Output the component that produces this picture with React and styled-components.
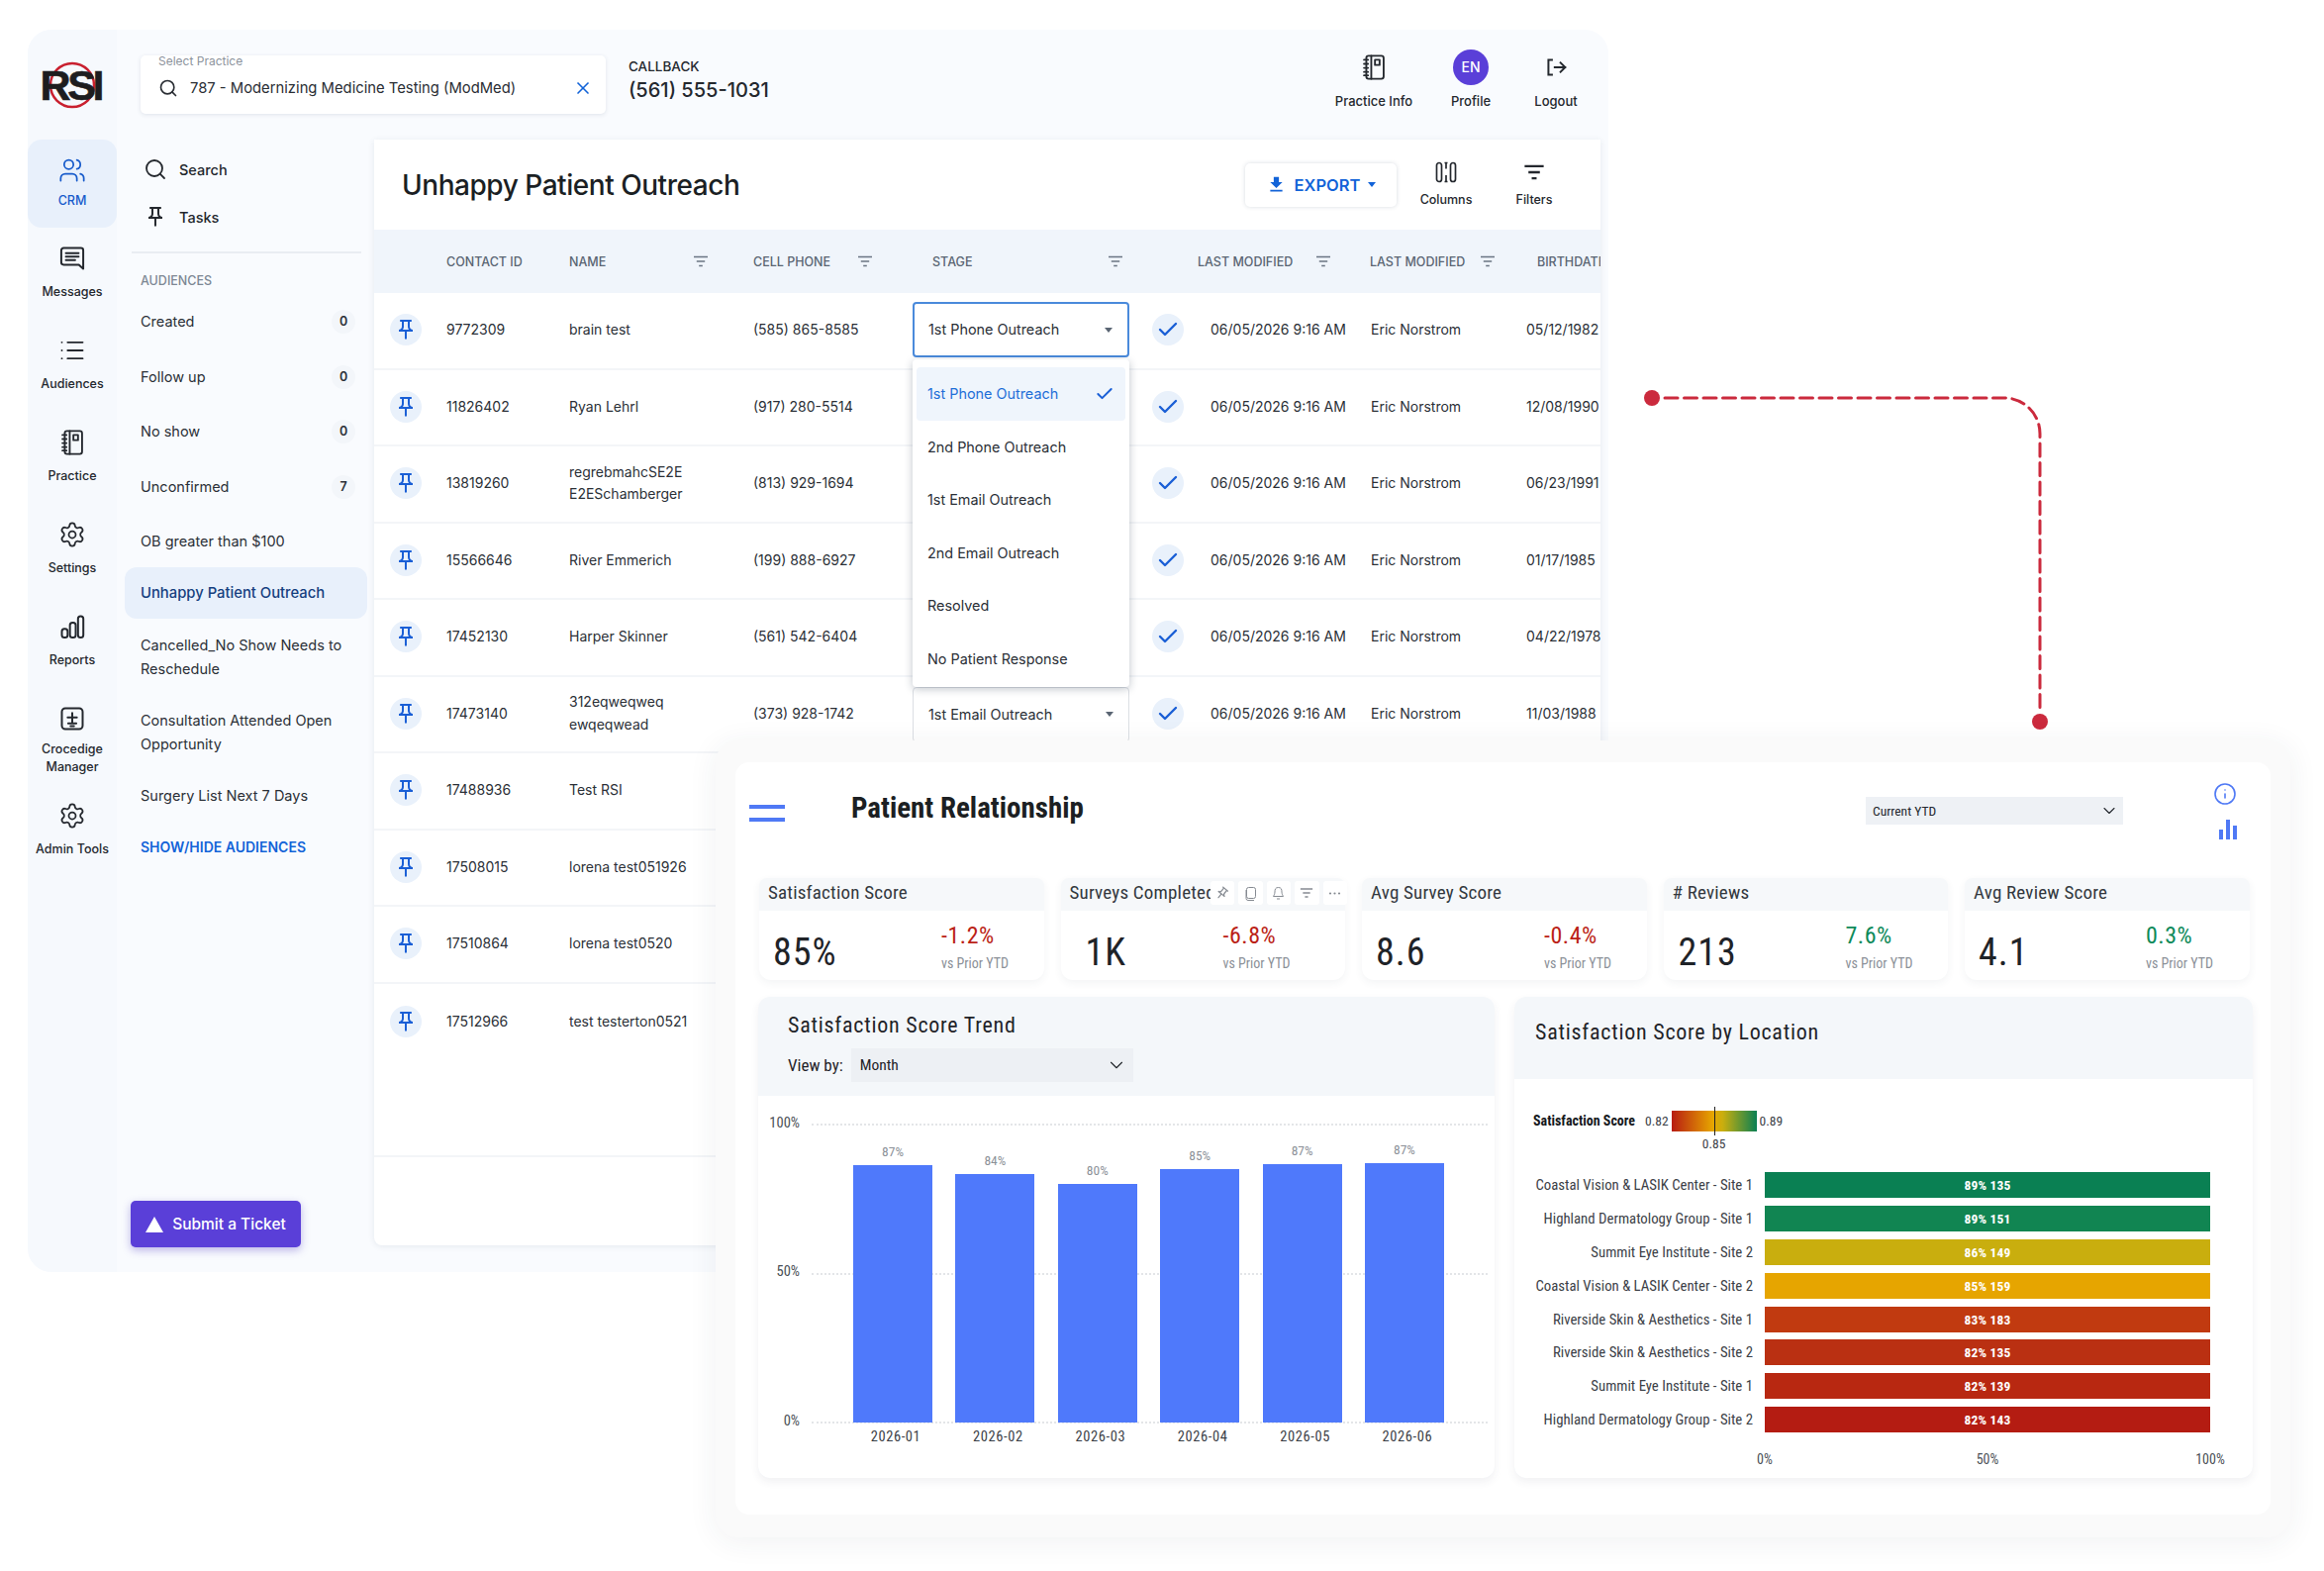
import React from 'react';
import styled, { createGlobalStyle } from 'styled-components';
import { Search, X, Check, Info, ChevronDown, Users, List, Settings } from 'lucide-react';

const ui = `Inter, "Noto Sans", sans-serif`;
const din = `Roboto, "Noto Sans", sans-serif`;

const Global = createGlobalStyle`
  html, body { margin: 0; padding: 0; background: #fff; }
  * { box-sizing: border-box; }
  #root { width: 2348px; height: 1587px; }
`;

const Page = styled.div`position: relative; width: 2348px; height: 1587px; overflow: hidden; background: #fff; font-family: ${ui}; color: #24282e;`;

/* free-canvas windows */
const AppWindow = styled.section`
  position: absolute; left: 28px; top: 30px; width: 1597px; height: 1255px;
  display: flex; background: #f9fbfe; border-radius: 24px; overflow: hidden;
`;
const ReportWindow = styled.section`
  position: absolute; left: 723px; top: 748px; width: 1591px; height: 805px;
  padding: 22px 20px 23px; background: #fafafa; border-radius: 22px;
  box-shadow: 0 4px 30px rgba(40, 50, 70, .07);
`;
const Connector = styled.svg`position: absolute; left: 1650px; top: 385px;`;

/* rail */
const Rail = styled.nav`width: 90px; padding-top: 111px; display: flex; flex-direction: column; background: #f6f9fd;`;
const RailItem = styled.div`
  height: ${p => p.$h || 93}px; display: flex; flex-direction: column; align-items: center; padding-top: 17px; gap: ${p => p.$gap || 11}px;
  font-size: 12.5px; line-height: 18px; font-weight: 500; text-align: center; color: ${p => p.$active ? '#175bcb' : '#24282e'};
  background: ${p => p.$active ? '#e8f0fb' : 'transparent'}; border-radius: ${p => p.$active ? '14px' : '0'};
  svg { width: 28px; height: 28px; flex: none; }
`;
const BodyCol = styled.div`flex: 1; display: flex; flex-direction: column; min-width: 0;`;
const TopBar = styled.header`height: 111px; display: flex; align-items: flex-start; padding: 26px 0 0 24px;`;
const PracticeBox = styled.div`
  position: relative; width: 470px; height: 59px; background: #fff; border-radius: 5px;
  box-shadow: 0 1px 4px rgba(40, 60, 90, .12); display: flex; align-items: center; padding: 6px 13px 0 18px; gap: 12px;
  font-size: 14.8px; font-weight: 400; color: #2a2e34;
`;
const FloatLabel = styled.span`position: absolute; left: 18px; top: -2px; font-size: 12px; color: #8c939c;`;
const PracticeName = styled.span`flex: 1; white-space: nowrap;`;
const Callback = styled.div`margin-left: 23px; padding-top: 2px;`;
const CallbackLabel = styled.div`font-size: 13.5px; line-height: 18px; font-weight: 500; color: #24282e;`;
const CallbackPhone = styled.div`font-size: 20px; line-height: 30px; font-weight: 500; color: #24282e;`;
const TopActions = styled.div`margin-left: auto; margin-right: 7px; display: flex; align-items: flex-start;`;
const TopAction = styled.div`
  width: ${p => p.$w}px; display: flex; flex-direction: column; align-items: center; gap: 11px; font-size: 13px; line-height: 18px; font-weight: 500; color: #24282e; margin-top: -2px;
  svg { width: 28px; height: 28px; }
`;
const Avatar = styled.div`width: 36px; height: 36px; margin-top: -4px; margin-bottom: -4px; border-radius: 50%; background: #5a3fd8; color: #fff; display: flex; align-items: center; justify-content: center; font-size: 14px; font-weight: 500;`;
const Content = styled.div`flex: 1; display: flex; min-height: 0;`;

/* audience panel */
const AudiencePanel = styled.aside`width: 260px; padding: 6px 7px 0 8px; display: flex; flex-direction: column; position: relative;`;
const QuickLink = styled.div`
  height: 48px; display: flex; align-items: center; gap: 12px; padding-left: 19px; font-size: 14.5px; font-weight: 500; color: #24282e;
  svg { width: 24px; height: 24px; flex: none; }
`;
const Divider = styled.div`height: 2px; margin: 11px 6px 0 7px; background: #e9edf2;`;
const SectionLabel = styled.div`margin: 19px 0 4px 16px; font-size: 12.5px; line-height: 18px; font-weight: 500; color: #7d8794;`;
const Audience = styled.div`
  min-height: ${p => p.$h}px; display: flex; align-items: center; justify-content: space-between; padding: ${p => p.$active ? '2px' : '0'} 12px 0 16px; font-size: ${p => p.$active ? 14.8 : 14.5}px; line-height: 23.5px;
  color: ${p => p.$active ? '#16407f' : '#2b3037'}; font-weight: ${p => p.$active ? 500 : 400}; background: ${p => p.$active ? '#e8f0fb' : 'transparent'}; border-radius: ${p => p.$active ? 12 : 0}px;
  margin-top: ${p => p.$mt || 0}px;
`;
const Count = styled.span`width: 24px; height: 24px; border-radius: 50%; background: #f3f6fa; font-size: 12.5px; font-weight: 600; display: flex; align-items: center; justify-content: center;`;
const ShowHide = styled.div`margin: 17px 0 0 16px; font-size: 14px; font-weight: 600; color: #1263d8;`;
const TicketBtn = styled.button`
  position: absolute; left: 14px; bottom: 25px; width: 172px; height: 47px; border: 0; border-radius: 5px; background: #5a3fd8; color: #fff;
  display: flex; align-items: center; justify-content: center; gap: 9px; font: 500 15.5px ${ui}; box-shadow: 0 3px 8px rgba(70, 50, 190, .35);
`;

/* main card */
const MainCard = styled.main`width: 1239px; height: 1117px; background: #fff; border-radius: 0 0 8px 8px; box-shadow: 0 1px 6px rgba(50, 70, 100, .1); display: flex; flex-direction: column; overflow: hidden;`;
const CardHead = styled.div`height: 91px; flex: none; display: flex; align-items: center; padding: 0 28px;`;
const CardTitle = styled.h1`margin: 0; font-size: 28px; font-weight: 500; color: #1b1f24; letter-spacing: -.46px;`;
const ExportBtn = styled.div`
  margin-left: auto; width: 153px; height: 44px; border-radius: 5px; background: #fff; box-shadow: 0 0 4px rgba(40, 60, 90, .18);
  display: flex; align-items: center; justify-content: center; gap: 8px; font-size: 16.5px; font-weight: 600; color: #1263d8; svg { flex: none; }
`;
const HeadTool = styled.div`
  width: ${p => p.$w}px; display: flex; flex-direction: column; align-items: center; gap: 9px; font-size: 12.5px; line-height: 16px; font-weight: 500; color: #24282e;
`;
const Rows = styled.div`flex: 1; position: relative;`;
const HeaderRow = styled.div`
  height: 64px; display: grid; grid-template-columns: 73px 124px 186px 181px 268px 174px 169px 1fr; align-items: center; background: #f0f5fb;
  font-size: 12.5px; font-weight: 500; color: #5a6573; white-space: nowrap;
`;
const HeadCell = styled.div`grid-column: ${p => p.$col}; display: flex; justify-content: space-between; align-items: center; padding-right: ${p => p.$pr || 0}px; overflow: hidden;`;
const Row = styled.div`
  height: 77.5px; display: grid; grid-template-columns: 73px 124px 186px 161px 219px 82px 162px 157px 1fr; align-items: center; position: relative;
  border-bottom: ${p => p.$last ? 'none' : '2px solid #f3f5f8'}; font-size: 14px; line-height: 22.5px; color: #2b3037; white-space: nowrap; padding-bottom: 1px;
`;
const Round = styled.div`width: 32px; height: 32px; border-radius: 50%; background: #e9f1fb; color: #1a5fd6; display: flex; align-items: center; justify-content: center; margin-left: ${p => p.$ml}px;`;
const StageSelect = styled.div`
  height: 56px; display: flex; align-items: center; justify-content: space-between; padding: 0 15px 0 ${p => p.$focus ? 14 : 15}px; background: #fff; border-radius: 4px; font-size: 14.4px;
  border: ${p => p.$focus ? '2px solid #4a8adb' : '1px solid #dcdfe4'}; margin-top: ${p => p.$focus ? 0 : 2}px;
`;
const Caret = styled.span`width: 0; height: 0; border-left: 4px solid transparent; border-right: 4px solid transparent; border-top: 5px solid ${p => p.$c || '#5a6573'};`;
const Menu = styled.div`
  position: absolute; left: 544px; top: 131px; width: 219px; height: 331px; background: #fff; z-index: 3; border-radius: 4px; padding: 8px 4px;
  box-shadow: 0 2px 8px rgba(30, 45, 70, .28); font-size: 14.4px; color: #2b3037;
`;
const MenuItem = styled.div`
  height: 53.5px; display: flex; align-items: center; justify-content: space-between; padding: 0 11px 0 11px; border-radius: 4px;
  background: ${p => p.$on ? '#eff5fc' : 'transparent'}; color: ${p => p.$on ? '#1f6fd8' : '#2b3037'};
`;
const TableFoot = styled.div`position: absolute; left: 0; right: 0; top: 935px; height: 2px; background: #f3f5f8;`;

/* report */
const ReportInner = styled.div`height: 100%; background: #fff; border-radius: 14px; padding: 0 22px 0 14px; font-family: ${din}; font-stretch: 75%; display: flex; flex-direction: column;`;
const ReportHead = styled.div`height: 117px; flex: none; display: flex; align-items: flex-start; position: relative;`;
const Burger = styled.div`width: 36px; height: 17px; margin-top: 43px; border-top: 4px solid #4f79f5; border-bottom: 4px solid #4f79f5;`;
const ReportTitle = styled.h2`margin: 27px 0 0 67px; font-size: 29px; line-height: 38px; font-weight: 700; color: #1c1f23;`;
const YearSelect = styled.div`
  margin: 35px 0 0 auto; width: 260px; height: 28px; background: #eef1f5; display: flex; align-items: center; justify-content: space-between; padding: 0 4px 0 7px; font-size: 13.5px; color: #24282e;
  svg { stroke-width: 1.3; }
`;
const ReportTools = styled.div`width: 149px; flex: none; padding: 20px 34px 0 0; margin-right: -22px; display: flex; flex-direction: column; align-items: flex-end; gap: 14px; color: #4f79f5;`;
const Kpis = styled.div`display: grid; grid-template-columns: repeat(5, 287.5px); column-gap: 17px; height: 103px; flex: none; margin-left: 10px; margin-right: -32px;`;
const Kpi = styled.article`position: relative; background: #f6f8fa; border-radius: 8px 8px 12px 12px; box-shadow: 0 3px 8px rgba(50, 60, 80, .06); display: flex; flex-direction: column;`;
const KpiLabel = styled.div`height: 33px; flex: none; padding-left: 9px; font-size: 19px; line-height: 30px; letter-spacing: .2px; color: #33383e; white-space: nowrap; overflow: hidden;`;
const KpiBody = styled.div`flex: 1; background: #fff; border-radius: 0 0 12px 12px; display: flex; position: relative;`;
const KpiValue = styled.div`margin: 21px 0 0 ${p => p.$x}px; font-size: 38px; line-height: 42px; color: #1f2328; letter-spacing: 1px;`;
const KpiDelta = styled.div`position: absolute; left: ${p => p.$x}px; top: 12px; display: flex; flex-direction: column;`;
const DeltaPct = styled.span`font-size: 24px; line-height: 26px; letter-spacing: .5px; color: ${p => p.$up ? '#0e8a5a' : '#bb1f17'};`;
const DeltaNote = styled.span`font-size: 14px; line-height: 18px; margin-top: 6px; color: #8b9097;`;
const HoverTools = styled.div`position: absolute; left: 151px; top: 3px; display: flex; gap: 4px; z-index: 2;`;
const HoverTool = styled.div`width: 24.5px; height: 24px; background: #fff; border-radius: 3px; color: #868b92; display: flex; align-items: center; justify-content: center;`;
const TiltedPin = styled.span`display: flex; transform: rotate(40deg);`;
const Charts = styled.div`display: grid; grid-template-columns: 744px 746px; column-gap: 20px; margin-top: 17px; height: 486px; flex: none; margin-left: 9px; margin-right: -32px;`;
const ChartCard = styled.article`background: #f4f7fa; border-radius: 12px; display: flex; flex-direction: column; box-shadow: 0 4px 8px rgba(50, 60, 80, .07); overflow: hidden;`;
const ChartHead = styled.div`height: ${p => p.$h}px; flex: none; padding: ${p => p.$pt}px 0 0 ${p => p.$pl}px; font-size: 22px; line-height: 28px; font-weight: 400; letter-spacing: .75px; color: #1f2328;`;
const ViewRow = styled.div`display: flex; align-items: center; gap: 8px; margin-top: 9px; font-size: 17px; letter-spacing: 0;`;
const ViewSelect = styled.div`width: 285px; height: 34px; background: #edf0f4; display: flex; align-items: center; justify-content: space-between; padding: 0 6px 0 9px; font-size: 15.5px; svg { stroke-width: 1.2; }`;
const ChartBody = styled.div`flex: 1; background: #fff; border-radius: 0 0 12px 12px; position: relative;`;
const ColumnPlot = styled.div`
  position: absolute; left: 54px; top: 28px; width: 683px; height: 302px; display: grid; grid-template-columns: repeat(6, 80px); column-gap: 23.4px; padding-left: 42px; align-items: end;
`;
const GridLine = styled.div`position: absolute; left: 0; right: 0; top: ${p => p.$y}px; border-top: 2px dotted #e3e5e8;`;
const AxisLabel = styled.span`position: absolute; left: -54px; width: 42px; top: ${p => p.$y - 9}px; text-align: right; font-size: 14.5px; line-height: 18px; color: #4b5056;`;
const ColBar = styled.div`position: relative; height: ${p => p.$h}px; background: #4f79fb;`;
const ColVal = styled.span`position: absolute; left: 0; right: 0; top: -23px; text-align: center; font-size: 13.5px; line-height: 18px; color: #8c9198;`;
const ColTick = styled.span`position: absolute; left: -7px; right: -13px; bottom: -24px; text-align: center; font-size: 14.5px; line-height: 18px; letter-spacing: .6px; color: #3c4147;`;
const Legend = styled.div`position: absolute; left: 19px; top: 30px; display: flex; align-items: center; font-size: 13.5px; color: #3c4147; height: 24px; white-space: nowrap;`;
const LegendTitle = styled.b`font-size: 14px; color: #15181c; width: 113px;`;
const LegendRamp = styled.div`position: relative; width: 86px; height: 21px; margin: 0 3px 0 3px; background: linear-gradient(90deg, #b81c12, #e6a500 48%, #c9ae0e 60%, #0a8053);`;
const RampMark = styled.span`position: absolute; left: 43px; top: -4px; height: 29px; border-left: 1.5px solid #222;`;
const RampVal = styled.span`position: absolute; left: 23px; width: 40px; top: 25px; text-align: center;`;
const BarPlot = styled.div`position: absolute; left: 19px; top: 94px; width: 700px;`;
const BarRow = styled.div`display: grid; grid-template-columns: 222px 450px; column-gap: 12px; height: 33.9px; align-items: start; position: relative;`;
const BarName = styled.span`text-align: right; font-size: 14.8px; line-height: 26px; color: #3c4147; white-space: nowrap;`;
const Bar = styled.div`height: 26px; background: ${p => p.$c}; color: #fff; font-size: 13.5px; line-height: 26px; font-weight: 700; text-align: center; letter-spacing: .2px;`;
const XTick = styled.span`position: absolute; left: ${p => p.$x}px; top: 376px; width: 50px; text-align: center; font-size: 14px; color: #4b5056;`;

const Notebook = () => (
  <svg viewBox="0 0 24 24" fill="none" stroke="currentColor" strokeWidth="1.6" strokeLinejoin="round" strokeLinecap="round">
    <rect x="5.500" y="2" width="15" height="20" rx="2" />
    <path d="M9.800 2v20M3.500 5.500h3.500M3.500 9h3.500M3.500 12.500h3.500M3.500 16h3.500M3.500 19h3.500" />
    <path d="M13 5.500h4v4.500h-4z" />
  </svg>
);
const Message = () => (
  <svg viewBox="0 0 24 24" fill="none" stroke="currentColor" strokeWidth="1.7" strokeLinejoin="round" strokeLinecap="round">
    <path d="M4.500 3h15a2 2 0 0 1 2 2v16l-3.800-3.500H4.500a2 2 0 0 1-2-2V5a2 2 0 0 1 2-2z" />
    <path d="M6.500 7.500h11M6.500 10.500h11M6.500 13.500h8" />
  </svg>
);
const Bars = () => (
  <svg viewBox="0 0 24 24" fill="none" stroke="currentColor" strokeWidth="1.7">
    <rect x="3" y="14" width="5" height="7.500" rx="2.200" />
    <rect x="10" y="8.500" width="5" height="13" rx="2.200" />
    <rect x="17" y="3" width="4.600" height="18.500" rx="2.200" />
  </svg>
);
const Manager = () => (
  <svg viewBox="0 0 24 24" fill="none" stroke="currentColor" strokeWidth="1.7" strokeLinecap="round">
    <rect x="3" y="3" width="18" height="18" rx="3" />
    <path d="M12 7v8M8 11h8M8.500 16h7M10.500 18.500h3" />
  </svg>
);
const Logout = () => (
  <svg viewBox="0 0 24 24" fill="none" stroke="currentColor" strokeWidth="1.7" strokeLinecap="square">
    <path d="M8.500 5.500H5.500v13h3M11 12h9M16 8l4 4-4 4" />
  </svg>
);
const ColumnsIcon = () => (
  <svg width="22" height="22" viewBox="0 0 22 22" fill="none" stroke="#24282e" strokeWidth="1.7">
    <rect x="1.500" y="1.500" width="5" height="19" rx="2.500" /><path d="M9.500 1.500h3M9.500 20.500h3M11 1.500v6M11 14v6.500" /><rect x="15.500" y="1.500" width="5" height="19" rx="2.500" />
  </svg>
);
const FilterIcon = ({ s = 16, c = '#6a7583' }) => (
  <svg width={s} height={s} viewBox="0 0 16 16" fill="none" stroke={c} strokeWidth="1.7"><path d="M1 3.500h14M3.800 8h8.400M6.200 12.500h3.600" /></svg>
);
const Pin = ({ s = 24, c = 'currentColor' }) => (
  <svg width={s} height={s} viewBox="0 0 24 24" fill={c}><path d="M14 4v5c0 1.120.37 2.160 1 3H9c.65-.86 1-1.900 1-3V4h4m3-2H7c-.55 0-1 .45-1 1s.45 1 1 1h1v5c0 1.660-1.340 3-3 3v2h5.970v7l1 1 1-1v-7H19v-2c-1.660 0-3-1.340-3-3V4h1c.55 0 1-.45 1-1s-.45-1-1-1z" /></svg>
);
const Download = () => (
  <svg width="21" height="21" viewBox="0 0 24 24" fill="#1263d8"><path d="M5 20h14v-2H5v2zM19 9h-4V3H9v6H5l7 7 7-7z" /></svg>
);
const LogoBox = styled.div`position: relative; height: 111px; margin: -111px 0 0; flex: none; display: flex; align-items: center; justify-content: center;`;
const LogoText = styled.span`position: relative; font: 700 43px/46px "Liberation Sans", sans-serif; letter-spacing: -3.300px; padding-right: 3.300px; color: #1d1d1f; -webkit-text-stroke: .6px #1d1d1f;`;
const LogoRing = styled.svg`position: absolute; left: 50%; top: 50%; margin: -25px 0 0 -25px;`;

const rail = [
  { label: 'CRM', icon: <Users strokeWidth={1.5} />, active: true, h: 89, gap: 8 },
  { label: 'Messages', icon: <Message /> },
  { label: 'Audiences', icon: <List strokeWidth={1.6} /> },
  { label: 'Practice', icon: <Notebook /> },
  { label: 'Settings', icon: <Settings strokeWidth={1.5} /> },
  { label: 'Reports', icon: <Bars /> },
  { label: <>Crocedige<br />Manager</>, icon: <Manager />, h: 98, gap: 8 },
  { label: 'Admin Tools', icon: <Settings strokeWidth={1.5} /> },
];
const audiences = [
  ['Created', 0, 56], ['Follow up', 0, 55], ['No show', 0, 56], ['Unconfirmed', 7, 55], ['OB greater than $100', null, 56],
];
const audiences2 = [
  ['Cancelled_No Show Needs to Reschedule', 77], ['Consultation Attended Open Opportunity', 75], ['Surgery List Next 7 Days', 53],
];
const rowData = [
  ['9772309', 'brain test', '(585) 865-8585', '1st Phone Outreach', '05/12/1982'],
  ['11826402', 'Ryan Lehrl', '(917) 280-5514', '', '12/08/1990'],
  ['13819260', <>regrebmahcSE2E<br />E2ESchamberger</>, '(813) 929-1694', '', '06/23/1991'],
  ['15566646', 'River Emmerich', '(199) 888-6927', '', '01/17/1985'],
  ['17452130', 'Harper Skinner', '(561) 542-6404', '', '04/22/1978'],
  ['17473140', <>312eqweqweq<br />ewqeqwead</>, '(373) 928-1742', '1st Email Outreach', '11/03/1988'],
  ['17488936', 'Test RSI'], ['17508015', 'lorena test051926'], ['17510864', 'lorena test0520'], ['17512966', 'test testerton0521'],
];
const headers = [
  { t: 'CONTACT ID', col: 2 }, { t: 'NAME', col: 3, f: 1, pr: 45 }, { t: 'CELL PHONE', col: 4, f: 1, pr: 60 }, { t: 'STAGE', col: 5, f: 1, pr: 75 },
  { t: 'LAST MODIFIED', col: 6, f: 1, pr: 39 }, { t: 'LAST MODIFIED', col: 7, f: 1, pr: 42 }, { t: 'BIRTHDATE', col: 8 },
];
const stages = ['1st Phone Outreach', '2nd Phone Outreach', '1st Email Outreach', '2nd Email Outreach', 'Resolved', 'No Patient Response'];
const kpis = [
  { l: 'Satisfaction Score', v: '85%', vx: 14, d: '-1.2%', dx: 184 },
  { l: 'Surveys Completed', v: '1K', vx: 25, d: '-6.8%', dx: 164, tools: true },
  { l: 'Avg Survey Score', v: '8.6', vx: 14, d: '-0.4%', dx: 184 },
  { l: '# Reviews', v: '213', vx: 15, d: '7.6%', dx: 184, up: true },
  { l: 'Avg Review Score', v: '4.1', vx: 14, d: '0.3%', dx: 183, up: true },
];
const cols = [['87%', 260], ['84%', 251], ['80%', 241], ['85%', 256.5], ['87%', 261.5], ['87%', 262]];
const months = ['2026-01', '2026-02', '2026-03', '2026-04', '2026-05', '2026-06'];
const sites = [
  ['Coastal Vision & LASIK Center - Site 1', '89%  135', '#0a8053'], ['Highland Dermatology Group - Site 1', '89%  151', '#118552'],
  ['Summit Eye Institute - Site 2', '86%  149', '#c9ae0e'], ['Coastal Vision & LASIK Center - Site 2', '85%  159', '#e6a500'],
  ['Riverside Skin & Aesthetics - Site 1', '83%  183', '#c13a10'], ['Riverside Skin & Aesthetics - Site 2', '82%  135', '#ba3012'],
  ['Summit Eye Institute - Site 1', '82%  139', '#b82811'], ['Highland Dermatology Group - Site 2', '82%  143', '#b41c12'],
];

export default function App() {
  return (
    <Page>
      <Global />
      <AppWindow>
        <Rail>
          <LogoBox>
            <LogoRing width="50" height="50" viewBox="0 0 50 50" fill="none"><circle cx="25" cy="25" r="22" stroke="#c9202f" strokeWidth="2.500" /></LogoRing>
            <LogoText>RSI</LogoText>
          </LogoBox>
          {rail.map((r, i) => (
            <RailItem key={i} $active={r.active} $h={r.h} $gap={r.gap}>{r.icon}<span>{r.label}</span></RailItem>
          ))}
        </Rail>
        <BodyCol>
          <TopBar>
            <PracticeBox>
              <FloatLabel>Select Practice</FloatLabel>
              <Search size={20} strokeWidth={2} />
              <PracticeName>787 - Modernizing Medicine Testing (ModMed)</PracticeName>
              <X size={20} color="#1263d8" strokeWidth={2} />
            </PracticeBox>
            <Callback>
              <CallbackLabel>CALLBACK</CallbackLabel>
              <CallbackPhone>(561) 555-1031</CallbackPhone>
            </Callback>
            <TopActions>
              <TopAction $w={116}><Notebook />Practice Info</TopAction>
              <TopAction $w={80}><Avatar>EN</Avatar>Profile</TopAction>
              <TopAction $w={92}><Logout />Logout</TopAction>
            </TopActions>
          </TopBar>
          <Content>
            <AudiencePanel>
              <QuickLink><Search strokeWidth={1.8} />Search</QuickLink>
              <QuickLink><Pin />Tasks</QuickLink>
              <Divider />
              <SectionLabel>AUDIENCES</SectionLabel>
              {audiences.map(([t, c, h]) => (
                <Audience key={t} $h={h}><span>{t}</span>{c !== null && <Count>{c}</Count>}</Audience>
              ))}
              <Audience $h={52} $mt={-2} $active>Unhappy Patient Outreach</Audience>
              {audiences2.map(([t, h]) => <Audience key={t} $h={h}>{t}</Audience>)}
              <ShowHide>SHOW/HIDE AUDIENCES</ShowHide>
              <TicketBtn>
                <svg width="18" height="16" viewBox="0 0 18 16" fill="#fff"><path d="M9 0l9 16H0z" /></svg>
                Submit a Ticket
              </TicketBtn>
            </AudiencePanel>
            <MainCard>
              <CardHead>
                <CardTitle>Unhappy Patient Outreach</CardTitle>
                <ExportBtn><Download />EXPORT<Caret $c="#1263d8" /></ExportBtn>
                <HeadTool $w={100}><ColumnsIcon />Columns</HeadTool>
                <HeadTool $w={78}><FilterIcon s={22} c="#24282e" />Filters</HeadTool>
              </CardHead>
              <Rows>
                <HeaderRow>
                  {headers.map((h, i) => (
                    <HeadCell key={i} $col={h.col} $pr={h.pr}><span>{h.t}</span>{h.f && <FilterIcon />}</HeadCell>
                  ))}
                </HeaderRow>
                {rowData.map((r, i) => (
                  <Row key={i} $last={i === rowData.length - 1}>
                    <Round $ml={16}><Pin s={24} /></Round>
                    <span>{r[0]}</span>
                    <span>{r[1]}</span>
                    {r[2] && <span>{r[2]}</span>}
                    {r[2] && (r[3] ? <StageSelect $focus={i === 0}>{r[3]}<Caret /></StageSelect> : <span />)}
                    {r[2] && <Round $ml={23}><Check size={24} strokeWidth={2.4} /></Round>}
                    {r[2] && <span>06/05/2026 9:16 AM</span>}
                    {r[2] && <span>Eric Norstrom</span>}
                    {r[2] && <span>{r[4]}</span>}
                  </Row>
                ))}
                <TableFoot />
                <Menu>
                  {stages.map((s, i) => (
                    <MenuItem key={s} $on={i === 0}>{s}{i === 0 && <Check size={20} strokeWidth={2.4} color="#1a5fd6" />}</MenuItem>
                  ))}
                </Menu>
              </Rows>
            </MainCard>
          </Content>
        </BodyCol>
      </AppWindow>

      <Connector width="420" height="360" viewBox="0 0 420 360" fill="none">
        <circle cx="19" cy="17" r="8" fill="#cb2a3d" />
        <path d="M32 17H375a36 36 0 0 1 36 36V330" stroke="#cb2a3d" strokeWidth="3" strokeDasharray="13 6.500" strokeLinecap="round" />
        <circle cx="411" cy="344" r="8" fill="#cb2a3d" />
      </Connector>

      <ReportWindow>
        <ReportInner>
          <ReportHead>
            <Burger />
            <ReportTitle>Patient Relationship</ReportTitle>
            <YearSelect>Current YTD<ChevronDown size={20} /></YearSelect>
            <ReportTools>
              <Info size={24} strokeWidth={1.6} />
              <svg width="18" height="20" viewBox="0 0 18 20" fill="#4f79f5"><rect x="0" y="10" width="4" height="10" /><rect x="7" y="0" width="4" height="20" /><rect x="14" y="6" width="4" height="14" /></svg>
            </ReportTools>
          </ReportHead>
          <Kpis>
            {kpis.map(k => (
              <Kpi key={k.l}>
                <KpiLabel>{k.l}</KpiLabel>
                {k.tools && (
                  <HoverTools>
                    <HoverTool><TiltedPin><Pin s={15} /></TiltedPin></HoverTool>
                    <HoverTool><svg width="15" height="15" viewBox="0 0 15 15" fill="none" stroke="currentColor"><rect x="3.500" y="1.500" width="9" height="11" rx="2" /><path d="M3 4v8.500a2 2 0 0 0 2 2h6" /></svg></HoverTool>
                    <HoverTool><svg width="15" height="15" viewBox="0 0 15 15" fill="none" stroke="currentColor"><path d="M7.500 1.500c-3 0-3.500 2-3.500 4.500 0 2-1 3.500-1.500 4.500h10C12 9.500 11 8 11 6c0-2.500-.5-4.500-3.500-4.500zM6 13h3" /></svg></HoverTool>
                    <HoverTool><FilterIcon s={14} c="#868b92" /></HoverTool>
                    <HoverTool><svg width="13" height="3" viewBox="0 0 13 3" fill="currentColor"><circle cx="2" cy="1.500" r="1.100" /><circle cx="6.500" cy="1.500" r="1.100" /><circle cx="11" cy="1.500" r="1.100" /></svg></HoverTool>
                  </HoverTools>
                )}
                <KpiBody>
                  <KpiValue $x={k.vx}>{k.v}</KpiValue>
                  <KpiDelta $x={k.dx}>
                    <DeltaPct $up={k.up}>{k.d}</DeltaPct>
                    <DeltaNote>vs Prior YTD</DeltaNote>
                  </KpiDelta>
                </KpiBody>
              </Kpi>
            ))}
          </Kpis>
          <Charts>
            <ChartCard>
              <ChartHead $h={100} $pt={15} $pl={30}>
                Satisfaction Score Trend
                <ViewRow>View by:<ViewSelect>Month<ChevronDown size={22} /></ViewSelect></ViewRow>
              </ChartHead>
              <ChartBody>
                <ColumnPlot>
                  <GridLine $y={0} /><GridLine $y={151} /><GridLine $y={301} />
                  <AxisLabel $y={0}>100%</AxisLabel><AxisLabel $y={150}>50%</AxisLabel><AxisLabel $y={301}>0%</AxisLabel>
                  {cols.map(([v, h], i) => (
                    <ColBar key={i} $h={h}><ColVal>{v}</ColVal><ColTick>{months[i]}</ColTick></ColBar>
                  ))}
                </ColumnPlot>
              </ChartBody>
            </ChartCard>
            <ChartCard>
              <ChartHead $h={83} $pt={22} $pl={21}>Satisfaction Score by Location</ChartHead>
              <ChartBody>
                <Legend>
                  <LegendTitle>Satisfaction Score</LegendTitle>0.82
                  <LegendRamp><RampMark /><RampVal>0.85</RampVal></LegendRamp>0.89
                </Legend>
                <BarPlot>
                  {sites.map(([n, t, c]) => (
                    <BarRow key={n}><BarName>{n}</BarName><Bar $c={c}>{t}</Bar></BarRow>
                  ))}
                </BarPlot>
                <XTick $x={228}>0%</XTick><XTick $x={453}>50%</XTick><XTick $x={678}>100%</XTick>
              </ChartBody>
            </ChartCard>
          </Charts>
        </ReportInner>
      </ReportWindow>
    </Page>
  );
}
